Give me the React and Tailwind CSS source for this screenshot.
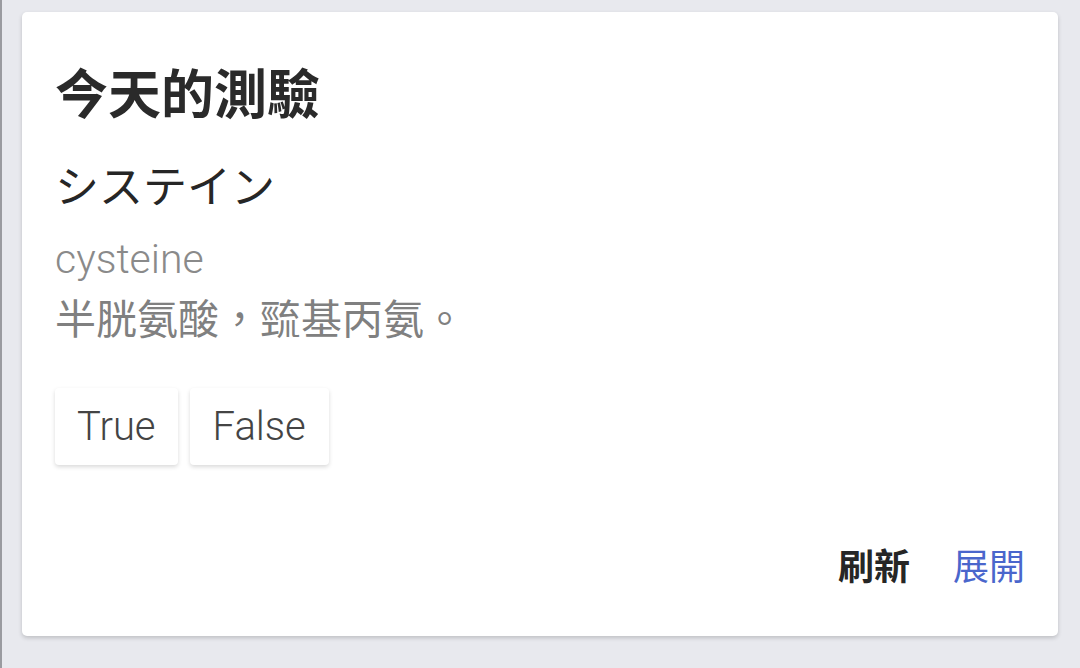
import React from "react";

const cjk = { fontFamily: 'Roboto, "Noto Sans CJK TC", sans-serif' };

export default function App() {
  return (
    <div className="w-[1080px] h-[668px] bg-[#e8e9ee] pt-[12px] pl-[20px] pr-[22px] border-l-2 border-[#9a9ba0]" style={cjk}>
      <div className="h-[624px] bg-white rounded-[5px] shadow-[0_2px_4px_rgba(0,0,0,0.18)] flex flex-col pl-[33px] pr-[33px] pt-[54px]">
        <h1 className="text-[53px] leading-[60px] font-bold text-[#2a2a2a]">今天的測驗</h1>
        <div className="mt-[34px] text-[44px] leading-[56px] text-[#262626]">システイン</div>
        <div className="mt-[18px] text-[41px] leading-[50px] font-light text-[#8a8a8a]">cysteine</div>
        <div className="mt-[10px] text-[41px] leading-[52px] text-[#808080]">半胱氨酸，巰基丙氨。</div>
        <div className="mt-[42px] flex gap-[12px]">
          <button className="h-[77px] px-[22px] rounded-[4px] bg-white text-[40px] font-light text-[#444] shadow-[0_2px_4px_rgba(0,0,0,0.15)]">True</button>
          <button className="h-[77px] px-[23px] rounded-[4px] bg-white text-[40px] font-light text-[#444] shadow-[0_2px_4px_rgba(0,0,0,0.15)]">False</button>
        </div>
        <div className="mt-auto mb-[44px] flex justify-end gap-[43px] text-[36px] leading-[48px]">
          <span className="font-bold text-[#262626]">刷新</span>
          <span className="text-[#4a66cc]">展開</span>
        </div>
      </div>
    </div>
  );
}
